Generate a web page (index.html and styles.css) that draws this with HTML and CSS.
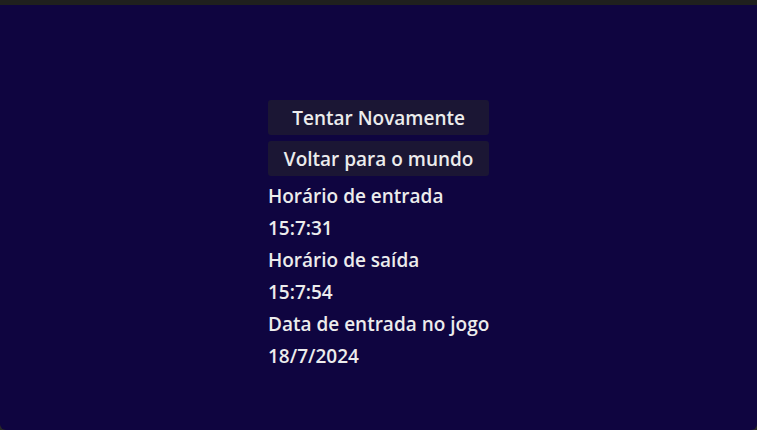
FILE: index.html
```html
<!DOCTYPE html>
<html lang="pt">
<head>
<meta charset="utf-8">
<link rel="stylesheet" href="styles.css">
</head>
<body>
<div class="topbar"></div>
<main class="screen">
  <div class="panel">
    <button class="btn">Tentar Novamente</button>
    <button class="btn">Voltar para o mundo</button>
    <div class="info">
      <p class="line">Horário de entrada</p>
      <p class="line">15:7:31</p>
      <p class="line">Horário de saída</p>
      <p class="line">15:7:54</p>
      <p class="line">Data de entrada no jogo</p>
      <p class="line">18/7/2024</p>
    </div>
  </div>
</main>
</body>
</html>
```
FILE: styles.css
```css
html, body {
  margin: 0;
  padding: 0;
  height: 100%;
  background: #2a2a27;
  overflow: hidden;
}
body {
  font-family: "Open Sans", "Noto Sans", sans-serif;
  font-weight: 600;
  color: #ececec;
}
.topbar {
  height: 5px;
  background: #1f201e;
}
.screen {
  display: flex;
  box-sizing: border-box;
  height: 425px;
  padding-left: 268px;
  padding-top: 95px;
  background: #0f0540;
  border-radius: 0 0 6px 6px;
}
.panel {
  display: inline-flex;
  flex-direction: column;
  align-self: flex-start;
  gap: 6px;
}
.btn {
  height: 35px;
  border: none;
  border-radius: 3px;
  background: #1b1634;
  color: #ececec;
  font-family: inherit;
  font-weight: 600;
  font-size: 19px;
  padding: 0 12px;
}
.info {
  margin-top: -2px;
}
.line {
  margin: 0;
  font-size: 19px;
  line-height: 32px;
}
```
